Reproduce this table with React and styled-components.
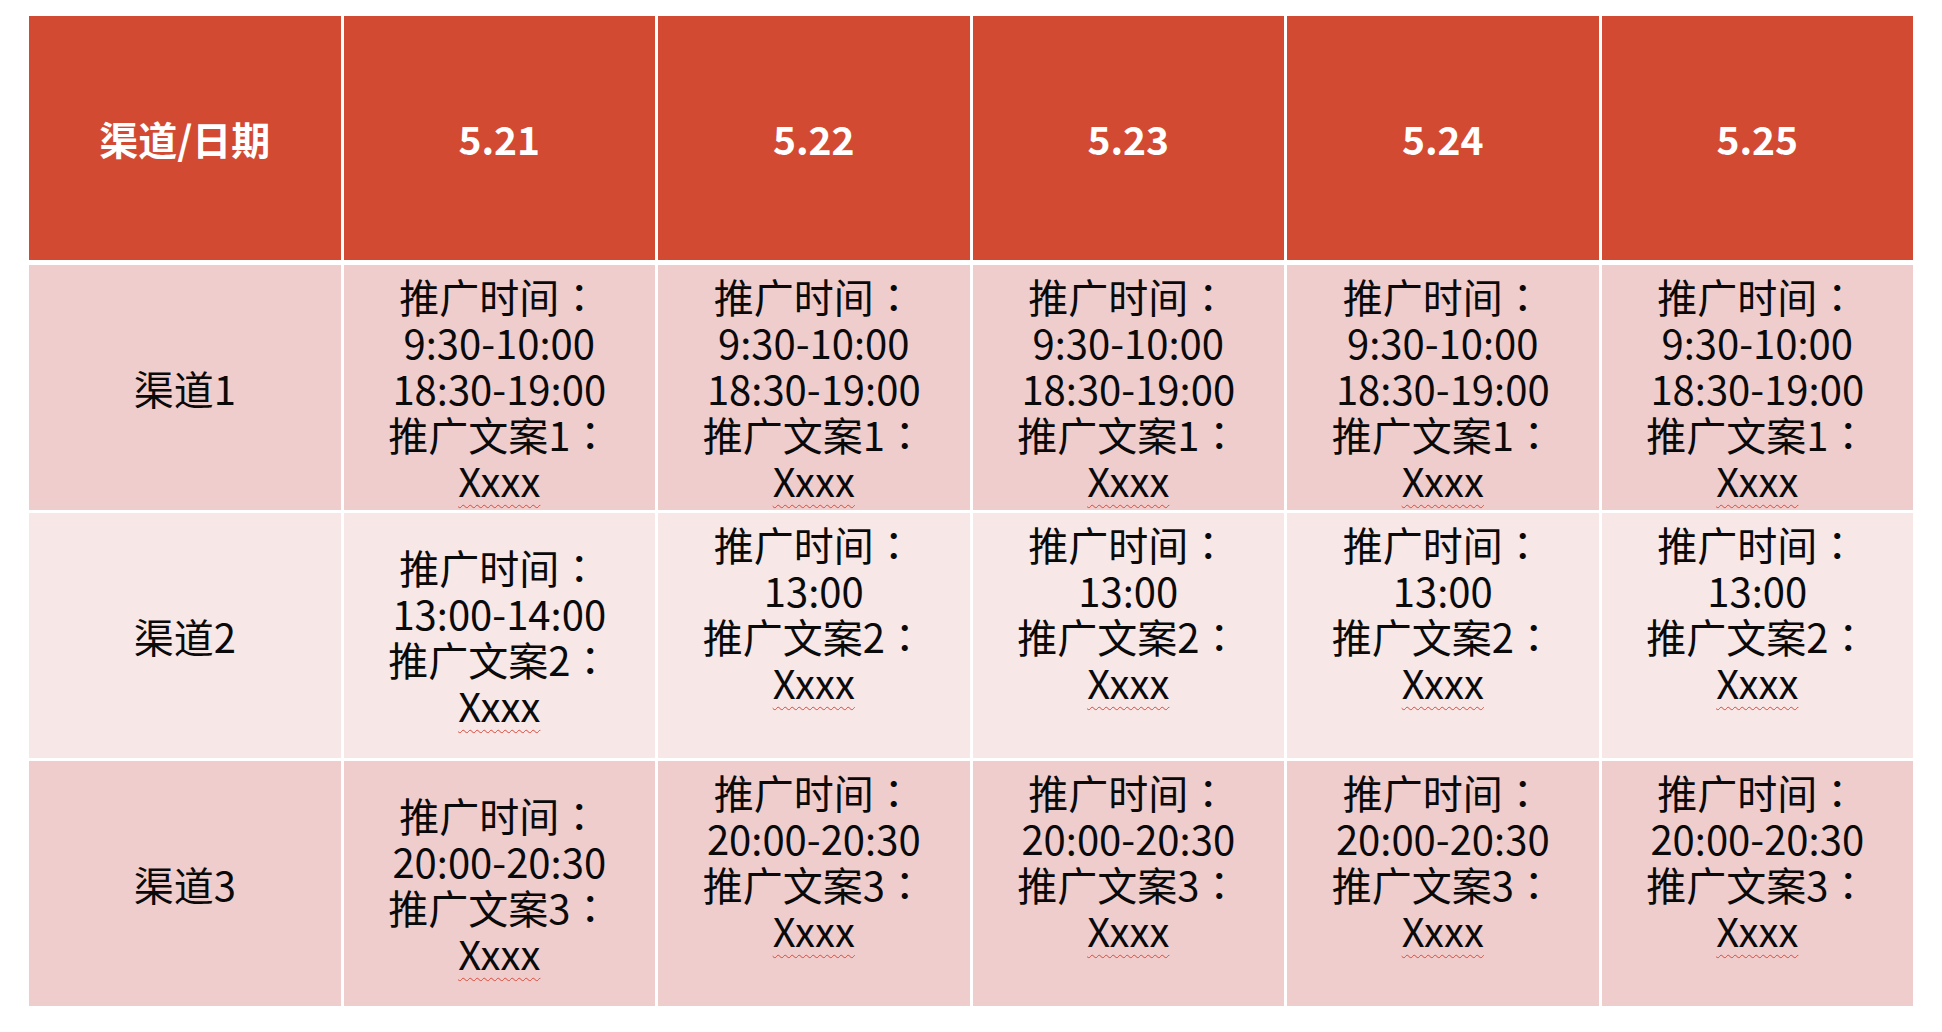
import React from 'react'
import styled, { createGlobalStyle } from 'styled-components'

const GlobalStyle = createGlobalStyle`
    html, body {
        margin: 0;
        padding: 0;
        background: #ffffff;
    }
    body {
        font-family: "Noto Sans CJK SC", "Noto Sans", sans-serif;
    }
`

const Page = styled.div`
    padding: 16px 0 0 29px;
`

const Table = styled.div`
    width: 1884px;
    display: flex;
    flex-direction: column;
    gap: 3px;
`

const Row = styled.div`
    display: grid;
    grid-template-columns: repeat(6, 1fr);
    column-gap: 3px;
    height: ${ ({ $height }) => $height }px;
    margin-bottom: ${ ({ $gapAfter }) => $gapAfter || 0 }px;
`

// Header

const HeaderCell = styled.div`
    background: #d34a33;
    color: #ffffff;
    font-weight: 700;
    font-size: 39px;
    display: flex;
    align-items: center;
    justify-content: center;
`

// Body

const BodyCell = styled.div`
    background: ${ ({ $shade }) => ($shade === 'dark' ? '#efcdcd' : '#f7e7e7') };
    color: #0a0a0a;
    font-size: 40px;
    line-height: 46px;
    display: flex;
    flex-direction: column;
    align-items: center;
    justify-content: center;
    text-align: center;
`

const Line = styled.div`
    min-height: 46px;
    white-space: nowrap;
`

// full-width colon drawn centred in its cell, as in the slide
const Colon = styled.span`
    font-family: "Noto Sans CJK TC", "Noto Sans CJK SC", sans-serif;
`

const Misspelled = styled.span`
    text-decoration-line: underline;
    text-decoration-style: wavy;
    text-decoration-color: #d9493a;
    text-decoration-thickness: 1.3px;
    text-underline-offset: 7px;
`

const dates = ['5.21', '5.22', '5.23', '5.24', '5.25']

const rows = [
    {
        channel: '渠道1',
        shade: 'dark',
        cells: dates.map(() => ['推广时间：', '9:30-10:00', '18:30-19:00', '推广文案1：', 'Xxxx']),
    },
    {
        channel: '渠道2',
        shade: 'light',
        cells: dates.map((d, i) => (i === 0
            ? ['推广时间：', '13:00-14:00', '推广文案2：', 'Xxxx']
            : ['推广时间：', '13:00', '推广文案2：', 'Xxxx', ''])),
    },
    {
        channel: '渠道3',
        shade: 'dark',
        cells: dates.map((d, i) => (i === 0
            ? ['推广时间：', '20:00-20:30', '推广文案3：', 'Xxxx']
            : ['推广时间：', '20:00-20:30', '推广文案3：', 'Xxxx', ''])),
    },
]

const renderText = text => {
    if (text === 'Xxxx') return <Misspelled>{ text }</Misspelled>
    if (text.endsWith('：')) return <>{ text.slice(0, -1) }<Colon>：</Colon></>
    return text
}

const CellLines = ({ lines }) => lines.map((text, i) => (
    <Line key={ i }>{ renderText(text) }</Line>
))

export default function App() {
    return (
        <Page>
            <GlobalStyle />
            <Table>
                <Row $height={ 244 } $gapAfter={ 2 }>
                    <HeaderCell>渠道/日期</HeaderCell>
                    { dates.map(d => <HeaderCell key={ d }>{ d }</HeaderCell>) }
                </Row>
                { rows.map(row => (
                    <Row key={ row.channel } $height={ 245 }>
                        <BodyCell $shade={ row.shade }>{ row.channel }</BodyCell>
                        { row.cells.map((lines, i) => (
                            <BodyCell key={ i } $shade={ row.shade }>
                                <CellLines lines={ lines } />
                            </BodyCell>
                        )) }
                    </Row>
                )) }
            </Table>
        </Page>
    )
}
